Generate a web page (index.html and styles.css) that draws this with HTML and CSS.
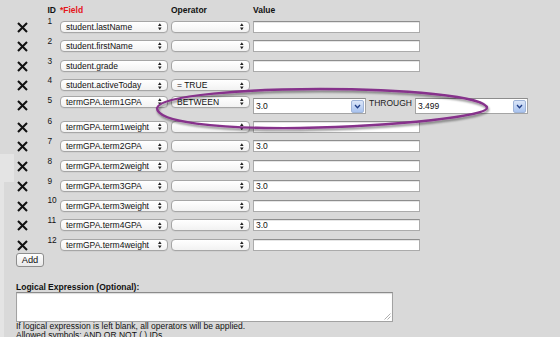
FILE: index.html
```html
<!DOCTYPE html>
<html>
<head>
<meta charset="utf-8">
<link rel="stylesheet" href="styles.css">
</head>
<body>
<div class="page">
  <div class="shade-band"></div>
  <div class="shade-strip"></div>

  <div class="criteria">
    <div class="head">
      <span class="col-x"></span>
      <span class="col-id">ID</span>
      <span class="col-field req">*Field</span>
      <span class="col-op">Operator</span>
      <span class="col-val">Value</span>
    </div>

    <div class="row">
      <span class="col-x"><svg class="del" viewBox="0 0 11 11"><path d="M1 1 L10 10 M10 1 L1 10"/></svg></span>
      <span class="col-id id">1</span>
      <span class="col-field"><span class="select field">student.lastName<svg class="arr" viewBox="0 0 4 8"><path d="M0 3.2 L2 0 L4 3.2Z M0 4.8 L2 8 L4 4.8Z"/></svg></span></span>
      <span class="col-op"><span class="select op"><svg class="arr" viewBox="0 0 4 8"><path d="M0 3.2 L2 0 L4 3.2Z M0 4.8 L2 8 L4 4.8Z"/></svg></span></span>
      <span class="input"></span>
    </div>
    <div class="row">
      <span class="col-x"><svg class="del" viewBox="0 0 11 11"><path d="M1 1 L10 10 M10 1 L1 10"/></svg></span>
      <span class="col-id id">2</span>
      <span class="col-field"><span class="select field">student.firstName<svg class="arr" viewBox="0 0 4 8"><path d="M0 3.2 L2 0 L4 3.2Z M0 4.8 L2 8 L4 4.8Z"/></svg></span></span>
      <span class="col-op"><span class="select op"><svg class="arr" viewBox="0 0 4 8"><path d="M0 3.2 L2 0 L4 3.2Z M0 4.8 L2 8 L4 4.8Z"/></svg></span></span>
      <span class="input"></span>
    </div>
    <div class="row">
      <span class="col-x"><svg class="del" viewBox="0 0 11 11"><path d="M1 1 L10 10 M10 1 L1 10"/></svg></span>
      <span class="col-id id">3</span>
      <span class="col-field"><span class="select field">student.grade<svg class="arr" viewBox="0 0 4 8"><path d="M0 3.2 L2 0 L4 3.2Z M0 4.8 L2 8 L4 4.8Z"/></svg></span></span>
      <span class="col-op"><span class="select op"><svg class="arr" viewBox="0 0 4 8"><path d="M0 3.2 L2 0 L4 3.2Z M0 4.8 L2 8 L4 4.8Z"/></svg></span></span>
      <span class="input"></span>
    </div>
    <div class="row">
      <span class="col-x"><svg class="del" viewBox="0 0 11 11"><path d="M1 1 L10 10 M10 1 L1 10"/></svg></span>
      <span class="col-id id">4</span>
      <span class="col-field"><span class="select field">student.activeToday<svg class="arr" viewBox="0 0 4 8"><path d="M0 3.2 L2 0 L4 3.2Z M0 4.8 L2 8 L4 4.8Z"/></svg></span></span>
      <span class="col-op"><span class="select op">= TRUE<svg class="arr" viewBox="0 0 4 8"><path d="M0 3.2 L2 0 L4 3.2Z M0 4.8 L2 8 L4 4.8Z"/></svg></span></span>
    </div>
    <div class="row row-range">
      <span class="col-x"><svg class="del" viewBox="0 0 11 11"><path d="M1 1 L10 10 M10 1 L1 10"/></svg></span>
      <span class="col-id id">5</span>
      <span class="col-field"><span class="select field">termGPA.term1GPA<svg class="arr" viewBox="0 0 4 8"><path d="M0 3.2 L2 0 L4 3.2Z M0 4.8 L2 8 L4 4.8Z"/></svg></span></span>
      <span class="col-op"><span class="select op">BETWEEN<svg class="arr" viewBox="0 0 4 8"><path d="M0 3.2 L2 0 L4 3.2Z M0 4.8 L2 8 L4 4.8Z"/></svg></span></span>
      <span class="combo"><span class="combo-text">3.0</span><span class="combo-btn"><svg viewBox="0 0 8 6"><path d="M1 1.2 L4 4.4 L7 1.2"/></svg></span></span>
      <span class="through">THROUGH</span>
      <span class="combo"><span class="combo-text">3.499</span><span class="combo-btn"><svg viewBox="0 0 8 6"><path d="M1 1.2 L4 4.4 L7 1.2"/></svg></span></span>
    </div>
    <div class="row row-b">
      <span class="col-x"><svg class="del" viewBox="0 0 11 11"><path d="M1 1 L10 10 M10 1 L1 10"/></svg></span>
      <span class="col-id id">6</span>
      <span class="col-field"><span class="select field">termGPA.term1weight<svg class="arr" viewBox="0 0 4 8"><path d="M0 3.2 L2 0 L4 3.2Z M0 4.8 L2 8 L4 4.8Z"/></svg></span></span>
      <span class="col-op"><span class="select op"><svg class="arr" viewBox="0 0 4 8"><path d="M0 3.2 L2 0 L4 3.2Z M0 4.8 L2 8 L4 4.8Z"/></svg></span></span>
      <span class="input"></span>
    </div>
    <div class="row row-b">
      <span class="col-x"><svg class="del" viewBox="0 0 11 11"><path d="M1 1 L10 10 M10 1 L1 10"/></svg></span>
      <span class="col-id id">7</span>
      <span class="col-field"><span class="select field">termGPA.term2GPA<svg class="arr" viewBox="0 0 4 8"><path d="M0 3.2 L2 0 L4 3.2Z M0 4.8 L2 8 L4 4.8Z"/></svg></span></span>
      <span class="col-op"><span class="select op"><svg class="arr" viewBox="0 0 4 8"><path d="M0 3.2 L2 0 L4 3.2Z M0 4.8 L2 8 L4 4.8Z"/></svg></span></span>
      <span class="input">3.0</span>
    </div>
    <div class="row row-b">
      <span class="col-x"><svg class="del" viewBox="0 0 11 11"><path d="M1 1 L10 10 M10 1 L1 10"/></svg></span>
      <span class="col-id id">8</span>
      <span class="col-field"><span class="select field">termGPA.term2weight<svg class="arr" viewBox="0 0 4 8"><path d="M0 3.2 L2 0 L4 3.2Z M0 4.8 L2 8 L4 4.8Z"/></svg></span></span>
      <span class="col-op"><span class="select op"><svg class="arr" viewBox="0 0 4 8"><path d="M0 3.2 L2 0 L4 3.2Z M0 4.8 L2 8 L4 4.8Z"/></svg></span></span>
      <span class="input"></span>
    </div>
    <div class="row row-b">
      <span class="col-x"><svg class="del" viewBox="0 0 11 11"><path d="M1 1 L10 10 M10 1 L1 10"/></svg></span>
      <span class="col-id id">9</span>
      <span class="col-field"><span class="select field">termGPA.term3GPA<svg class="arr" viewBox="0 0 4 8"><path d="M0 3.2 L2 0 L4 3.2Z M0 4.8 L2 8 L4 4.8Z"/></svg></span></span>
      <span class="col-op"><span class="select op"><svg class="arr" viewBox="0 0 4 8"><path d="M0 3.2 L2 0 L4 3.2Z M0 4.8 L2 8 L4 4.8Z"/></svg></span></span>
      <span class="input">3.0</span>
    </div>
    <div class="row row-b">
      <span class="col-x"><svg class="del" viewBox="0 0 11 11"><path d="M1 1 L10 10 M10 1 L1 10"/></svg></span>
      <span class="col-id id">10</span>
      <span class="col-field"><span class="select field">termGPA.term3weight<svg class="arr" viewBox="0 0 4 8"><path d="M0 3.2 L2 0 L4 3.2Z M0 4.8 L2 8 L4 4.8Z"/></svg></span></span>
      <span class="col-op"><span class="select op"><svg class="arr" viewBox="0 0 4 8"><path d="M0 3.2 L2 0 L4 3.2Z M0 4.8 L2 8 L4 4.8Z"/></svg></span></span>
      <span class="input"></span>
    </div>
    <div class="row row-b">
      <span class="col-x"><svg class="del" viewBox="0 0 11 11"><path d="M1 1 L10 10 M10 1 L1 10"/></svg></span>
      <span class="col-id id">11</span>
      <span class="col-field"><span class="select field">termGPA.term4GPA<svg class="arr" viewBox="0 0 4 8"><path d="M0 3.2 L2 0 L4 3.2Z M0 4.8 L2 8 L4 4.8Z"/></svg></span></span>
      <span class="col-op"><span class="select op"><svg class="arr" viewBox="0 0 4 8"><path d="M0 3.2 L2 0 L4 3.2Z M0 4.8 L2 8 L4 4.8Z"/></svg></span></span>
      <span class="input">3.0</span>
    </div>
    <div class="row row-last">
      <span class="col-x"><svg class="del" viewBox="0 0 11 11"><path d="M1 1 L10 10 M10 1 L1 10"/></svg></span>
      <span class="col-id id">12</span>
      <span class="col-field"><span class="select field">termGPA.term4weight<svg class="arr" viewBox="0 0 4 8"><path d="M0 3.2 L2 0 L4 3.2Z M0 4.8 L2 8 L4 4.8Z"/></svg></span></span>
      <span class="col-op"><span class="select op"><svg class="arr" viewBox="0 0 4 8"><path d="M0 3.2 L2 0 L4 3.2Z M0 4.8 L2 8 L4 4.8Z"/></svg></span></span>
      <span class="input"></span>
    </div>
  </div>

  <span class="add">Add</span>

  <div class="logic-label">Logical Expression (Optional):</div>
  <div class="textarea"><svg class="grip" viewBox="0 0 8 8"><path d="M7.5 1.5 L1.5 7.5 M7.5 4.5 L4.5 7.5"/></svg></div>
  <div class="help">If logical expression is left blank, all operators will be applied.<br>Allowed symbols: AND OR NOT ( ) IDs</div>

  <svg class="circle" viewBox="0 0 560 337" width="560" height="337">
    <defs>
      <filter id="sh" x="-10%" y="-50%" width="120%" height="200%">
        <feDropShadow dx="1" dy="2" stdDeviation="1.2" flood-color="#000" flood-opacity="0.45"/>
      </filter>
    </defs>
    <path d="M157 108 C160 95 250 89 320 89 C400 89 487 96 487 108 C487 116 400 126 300 128 C215 129 157 122 157 108 Z" filter="url(#sh)"/>
  </svg>
</div>
</body>
</html>
```

FILE: styles.css
```css
* { box-sizing: border-box; }

html, body {
  margin: 0;
  width: 560px;
  height: 337px;
  overflow: hidden;
}

body {
  background: #d9d9d9;
  font-family: "Liberation Sans", Arial, sans-serif;
  font-size: 8.5px;
  line-height: 10px;
  color: #111;
}

.page {
  position: relative;
  height: 337px;
  padding-left: 16px;
}

.shade-band {
  position: absolute;
  left: 0;
  top: 154px;
  width: 14px;
  height: 28px;
  background: #e4e4e4;
}
.shade-strip {
  position: absolute;
  left: 0;
  top: 182px;
  width: 4px;
  bottom: 0;
  background: #e4e4e4;
}

.criteria { position: relative; }

.head {
  display: flex;
  height: 20.6px;
  padding-top: 4.8px;
  font-weight: bold;
}

.col-x { width: 31.5px; flex: none; }
.col-id { width: 12.5px; flex: none; }
.col-field { width: 111px; flex: none; }
.col-op { width: 82px; flex: none; }
.req { color: #e5141b; }

.row {
  display: flex;
  align-items: flex-start;
  height: 19.6px;
}
.row-b { height: 19.72px; }
.row-range { height: 21.7px; }
.row-last { height: 14px; }

.del {
  display: block;
  width: 11px;
  height: 11px;
  margin-left: 1px;
  margin-top: 1px;
  fill: none;
  stroke: #111;
  stroke-width: 2.1;
}

.id { margin-top: -4.2px; font-size: 8.3px; }

.select {
  display: flex;
  align-items: center;
  justify-content: space-between;
  height: 12px;
  border: 1px solid #a6a6a6;
  border-radius: 4px;
  background: linear-gradient(#ffffff, #f2f2f2);
  padding: 0 5px 0 5px;
  white-space: nowrap;
  box-shadow: 0 0.5px 0 rgba(0,0,0,0.08);
}
.select.field { width: 108px; }
.select.op { width: 79px; }

.arr {
  width: 3.6px;
  height: 7.5px;
  flex: none;
  margin-left: auto;
  fill: #222;
}

.input {
  display: block;
  width: 167px;
  height: 12px;
  border: 1px solid #ababab;
  border-top-color: #8e8e8e;
  background: #fff;
  padding-left: 2px;
  box-shadow: inset 0 1px 0 #e6e6e6;
}

.row-range .select { margin-top: -3px; }

.combo {
  display: flex;
  align-items: center;
  width: 113px;
  height: 16.5px;
  margin-top: -1px;
  border: 1px solid #a4a4a4;
  border-top-color: #8c8c8c;
  background: #fff;
  padding-left: 2px;
}
.combo-text { flex: 1; }
.combo-btn {
  display: flex;
  align-items: center;
  justify-content: center;
  width: 13px;
  height: 13px;
  margin-right: 1px;
  border: 1px solid #9fb4d8;
  border-radius: 2px;
  background: linear-gradient(#dbe6f8, #a9c3ef);
}
.combo-btn svg {
  width: 7px;
  height: 5px;
  fill: none;
  stroke: #1f3d86;
  stroke-width: 1.6;
}

.through {
  margin: -0.8px 3px 0 3px;
  color: #222;
}

.add {
  display: flex;
  align-items: center;
  justify-content: center;
  width: 28px;
  height: 14px;
  border: 1px solid #8d8d8d;
  border-radius: 3px;
  background: linear-gradient(#ffffff, #e9e9e9);
  font-size: 9.3px;
}

.logic-label {
  margin-top: 15px;
  font-weight: bold;
}

.textarea {
  position: relative;
  width: 377px;
  height: 30px;
  border: 1px solid #a2a2a2;
  border-top-color: #8b8b8b;
  background: #fff;
  box-shadow: inset 0 1px 1px #dcdcdc;
}
.grip {
  position: absolute;
  right: 1px;
  bottom: 1px;
  width: 8px;
  height: 8px;
  fill: none;
  stroke: #9a9a9a;
  stroke-width: 0.8;
}

.help {
  line-height: 9.5px;
}

.circle {
  position: absolute;
  left: 0;
  top: 0;
  pointer-events: none;
  fill: none;
  stroke: #86308b;
  stroke-width: 2.4;
}
```
